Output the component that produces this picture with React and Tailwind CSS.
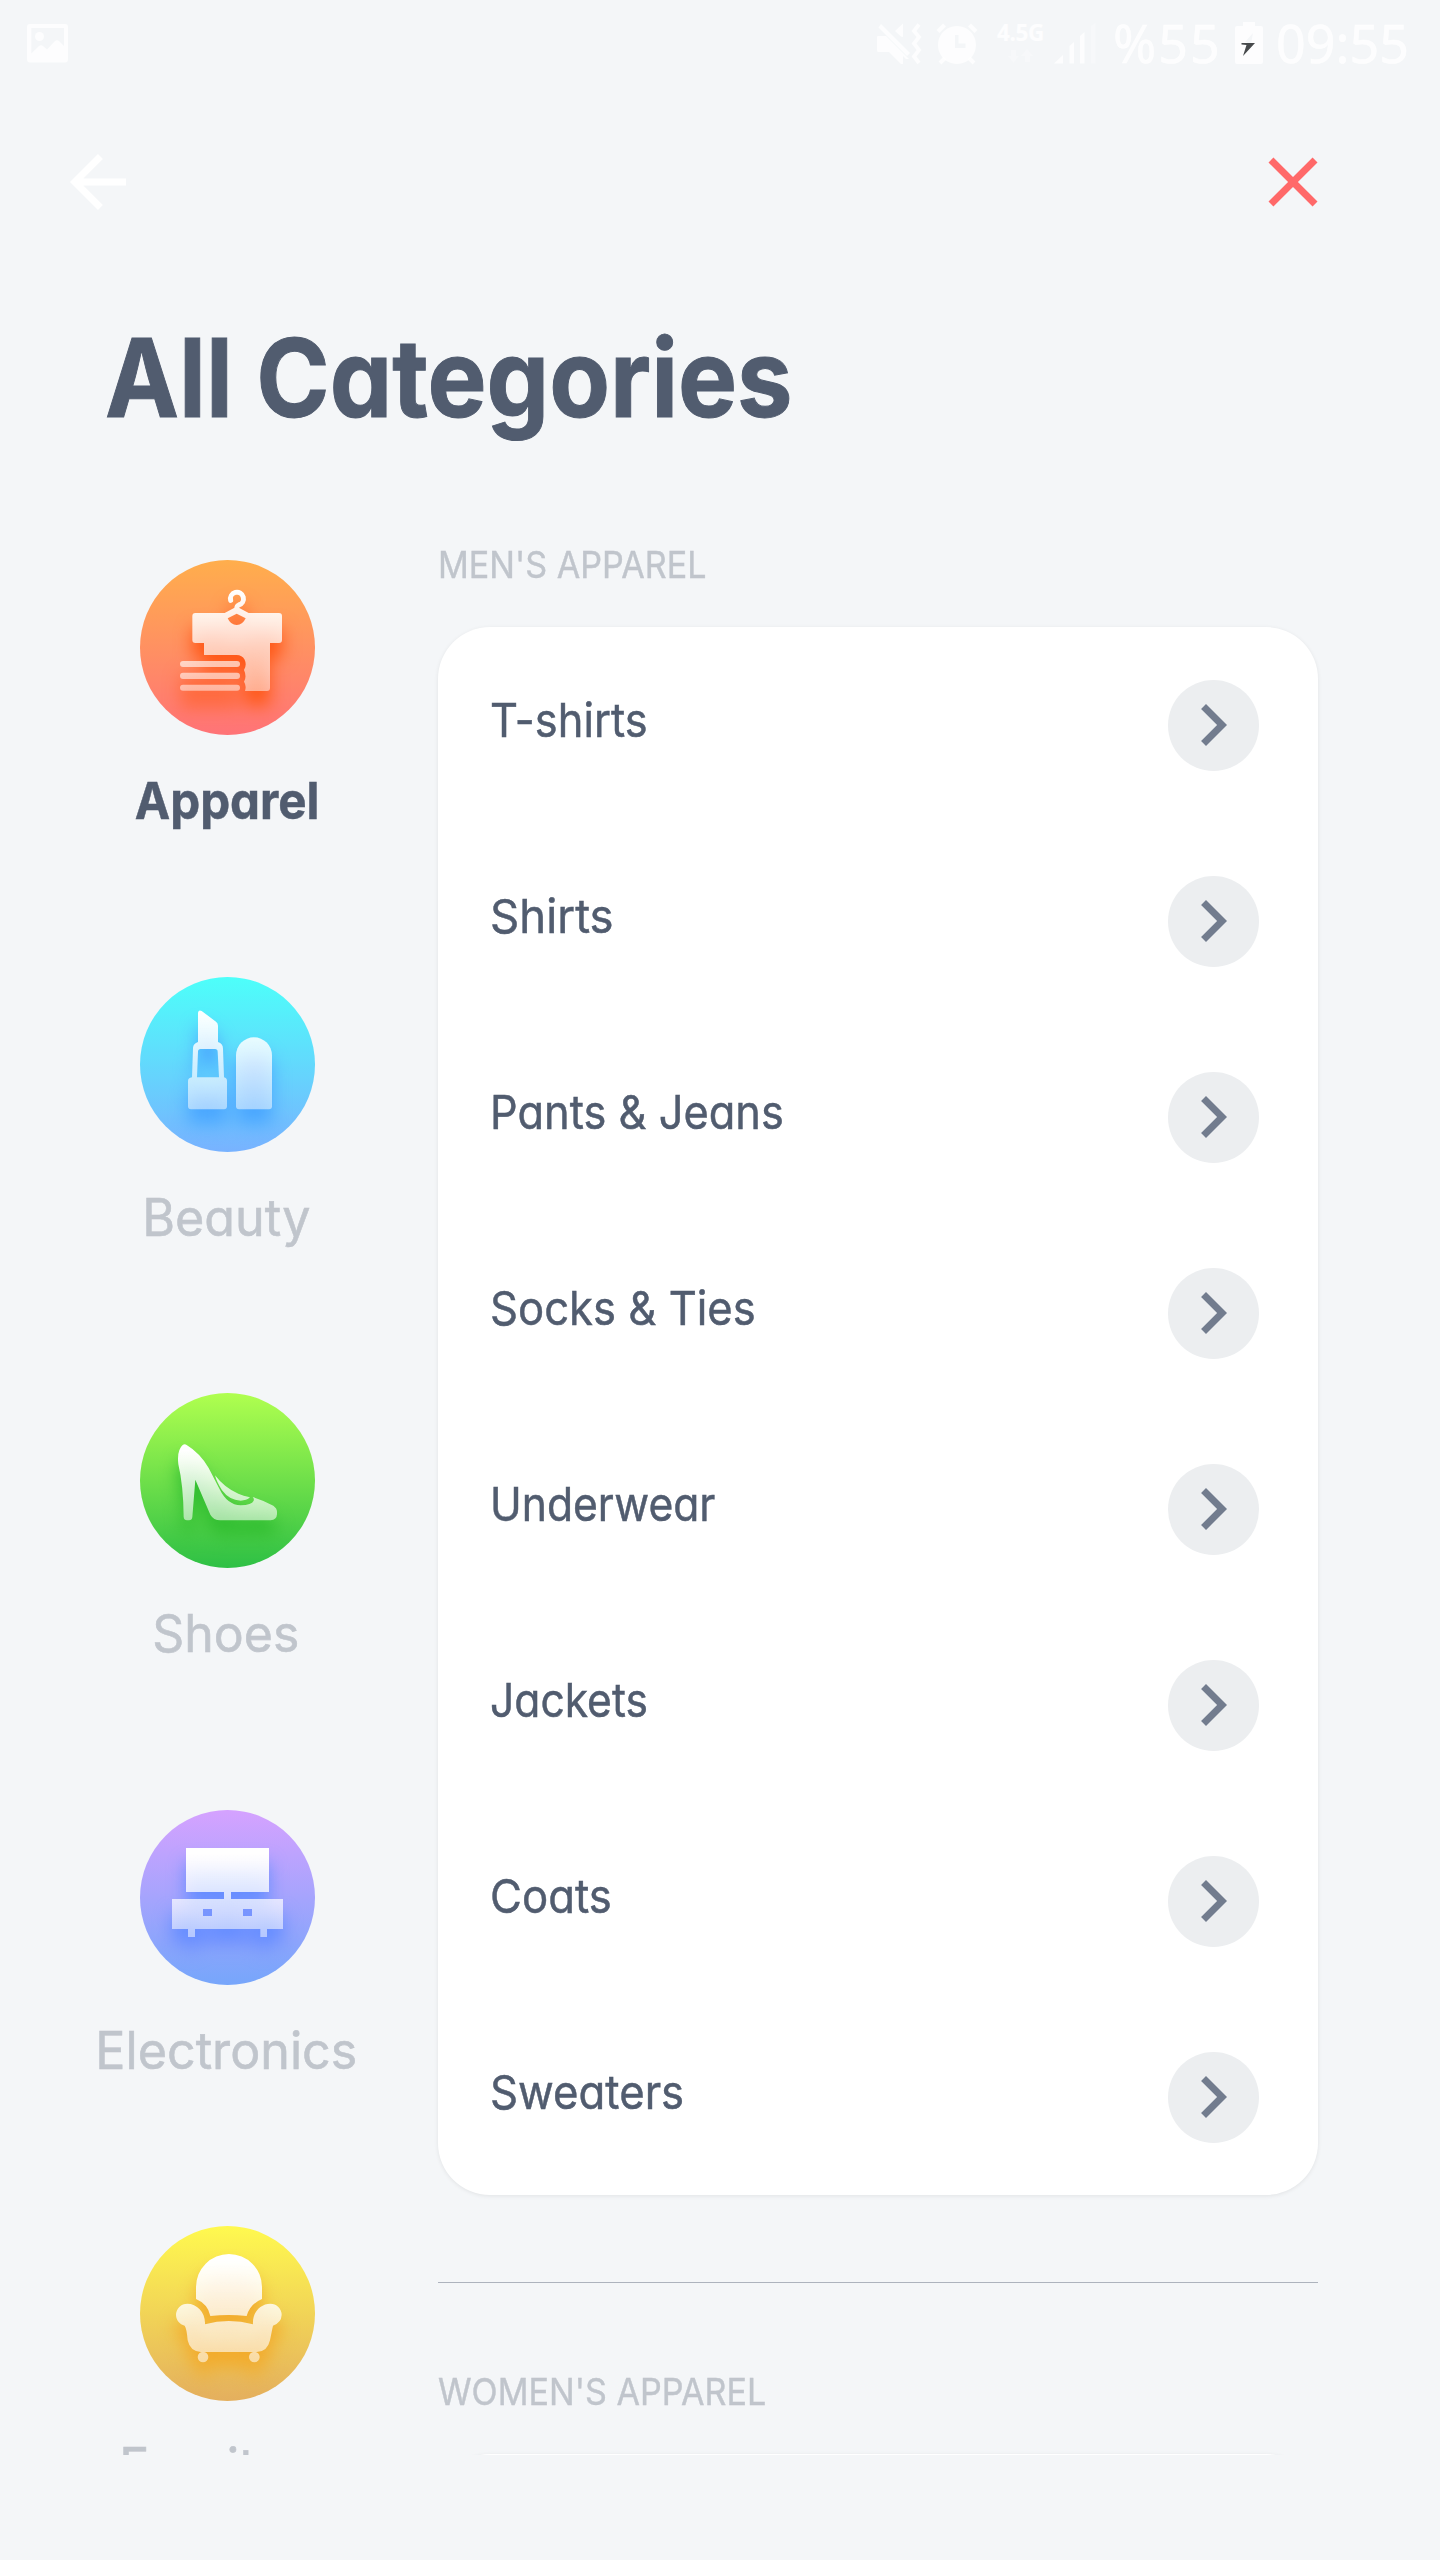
import { useId } from "react";

const categories = [
  {
    name: "Apparel",
    active: true,
    stretch: 0.923,
    viewBox: "60 60 525 525",
    box: [60, 60],
    from: "#ffae4c",
    to: "#ff7377",
    shadow: "#ff5717",
    top: 149,
    bottom: 453,
    fade: 0.5,
    shape: (
      <>
        <path d="M332 181A19.500 19.500 0 1 1 356 195Q350 197 350 208" fill="none" stroke="white" strokeWidth="15" strokeLinecap="round" />
        <path d="M226 219H314L342 204H358L386 219H477Q486 219 486 228V300Q486 309 477 309H450V444Q450 453 441 453H375Q380 437 372 425Q381 410 372 390Q381 375 374 359Q366 345 350 345H252V309H226Q217 309 217 300V228Q217 219 226 219Z" />
        <rect x="180" y="363" width="180" height="18" rx="9" />
        <rect x="180" y="398" width="180" height="19" rx="9" />
        <rect x="180" y="434" width="180" height="18" rx="9" />
        <path d="M323 235L350 221L377 235Q368 255 350 255Q332 255 323 235Z" fill="black" />
      </>
    ),
  },
  {
    name: "Beauty",
    stretch: 0.975,
    viewBox: "60 50 525 525",
    box: [60, 50],
    from: "#4dfffa",
    to: "#78b2ff",
    shadow: "#4aa6ff",
    top: 150,
    bottom: 447,
    fade: 0.5,
    shape: (
      <>
        <path d="M234 157Q236 147 245 152L288 184Q294 189 294 196V245Q309 250 309 265L312 351Q321 353 321 362V438Q321 447 312 447H213Q204 447 204 438V362Q204 353 216 351L219 262Q220 250 234 245Z" />
        <path d="M234 274Q234 266 242 266H285Q293 266 293 274L297 351H231Z" fill="black" />
        <path d="M348 285A54 54 0 0 1 456 285V438Q456 447 447 447H357Q348 447 348 438Z" />
      </>
    ),
  },
  {
    name: "Shoes",
    stretch: 0.97,
    viewBox: "60 68 525 525",
    box: [60, 68],
    from: "#b0ff4f",
    to: "#2ec045",
    shadow: "#30bd30",
    top: 240,
    bottom: 455,
    fade: 0.55,
    shape: (
      <>
        <path d="M188 224Q194 219 200 224Q240 248 266 293L299 357Q322 404 362 405Q395 404 401 391Q403 385 398 380Q433 391 460 406Q471 414 471 424V432Q470 449 452 450H300Q281 450 271 433L226 328L217 440Q216 450 207 450H201Q192 450 191 440Q190 345 175 282Q170 240 188 224Z" />
        <path d="M285 315Q315 354 355 370Q370 376 390 381Q380 391 362 391Q328 390 306 360Q290 335 285 315Z" />
      </>
    ),
  },
  {
    name: "Electronics",
    stretch: 0.975,
    viewBox: "180 60 525 525",
    box: [180, 60],
    from: "#d5a2ff",
    to: "#76a6fb",
    shadow: "#668dff",
    top: 190,
    bottom: 441,
    fade: 0.5,
    shape: (
      <>
        <rect x="318" y="174" width="249" height="132" />
        <rect x="432" y="300" width="21" height="30" />
        <rect x="276" y="327" width="333" height="90" />
        <rect x="324" y="415" width="21" height="26" />
        <rect x="541" y="415" width="20" height="26" />
        <rect x="369" y="357" width="27" height="21" fill="black" />
        <rect x="489" y="357" width="27" height="21" fill="black" />
      </>
    ),
  },
  {
    name: "Furniture",
    stretch: 0.98,
    viewBox: "180 78 525 525",
    box: [180, 78],
    from: "#fff94f",
    to: "#e4af5e",
    shadow: "#f2ab2c",
    top: 180,
    bottom: 487,
    fade: 0.55,
    shape: (
      <>
        <path d="M348 297V261A99 99 0 0 1 546 261V297Q510 312 500 348Q446 342 391 348Q384 312 348 297Z" />
        <path d="M314 377C299 373 288 360 288 345A34 34 0 0 1 322 311C351 311 377 337 375 373Q446 353 519 373C516 337 542 311 571 311A34 34 0 0 1 605 345Q604 368 579 377Q577 385 570 421Q562 456 530 456H362Q330 454 323 421Q320 385 314 377Z" />
        <circle cx="369" cy="471" r="16" />
        <circle cx="523" cy="471" r="16" />
      </>
    ),
  },
];

const items = [
  ["T-shirts", 0.924],
  ["Shirts", 0.97],
  ["Pants & Jeans", 0.923],
  ["Socks & Ties", 0.928],
  ["Underwear", 0.907],
  ["Jackets", 0.906],
  ["Coats", 0.93],
  ["Sweaters", 0.93],
];

function CategoryIcon({ category }) {
  const id = useId().replace(/[^a-zA-Z0-9]/g, "");
  const [x, y] = category.box;
  return (
    <svg viewBox={category.viewBox} className="size-[175px] shrink-0">
      <defs>
        <linearGradient id={`bg${id}`} x1="0" y1="0" x2="0" y2="1">
          <stop offset="0" stopColor={category.from} />
          <stop offset="1" stopColor={category.to} />
        </linearGradient>
        <linearGradient id={`fg${id}`} gradientUnits="userSpaceOnUse" x1="0" y1={category.top} x2="0" y2={category.bottom}>
          <stop offset="0" stopColor="white" />
          <stop offset="1" stopColor="white" stopOpacity={category.fade} />
        </linearGradient>
        <filter id={`blur${id}`} x="-20%" y="-20%" width="140%" height="140%" colorInterpolationFilters="sRGB">
          <feGaussianBlur stdDeviation="25" />
        </filter>
        <clipPath id={`clip${id}`}>
          <circle cx={x + 262.5} cy={y + 262.5} r="262.5" />
        </clipPath>
        <mask id={`mask${id}`} maskUnits="userSpaceOnUse" x={x} y={y} width="525" height="525">
          <g fill="white">{category.shape}</g>
        </mask>
      </defs>
      <circle cx={x + 262.5} cy={y + 262.5} r="262.5" fill={`url(#bg${id})`} />
      <g clipPath={`url(#clip${id})`}>
        <g transform="translate(0 45)" filter={`url(#blur${id})`}>
          <rect x={x} y={y} width="525" height="525" fill={category.shadow} mask={`url(#mask${id})`} />
        </g>
      </g>
      <rect x={x} y={y} width="525" height="525" fill={`url(#fg${id})`} mask={`url(#mask${id})`} />
    </svg>
  );
}

function StatusBar() {
  return (
    <div className="flex h-[87px] items-start text-white/80">
      <svg viewBox="0 0 41 39" className="ml-[27px] mt-[24px] h-[39px] w-[41px]" fill="currentColor">
        <path fillRule="evenodd" d="M3 0H38Q41 0 41 3V35Q41 38.500 38 38.500H3Q0 38.500 0 35V3Q0 0 3 0ZM4.300 4V29.500L12 22Q14 20.500 16 22L20 25.500L28 17Q30 15.500 32 17L37 22V4Z" />
        <circle cx="12.500" cy="12.500" r="4.500" />
      </svg>
      <div className="ml-auto flex w-[563px] items-start">
        <svg viewBox="0 0 45 42" className="mt-[23px] h-[42px] w-[45px] shrink-0" fill="currentColor">
          <path d="M1 13H9L13 17L32 36L29 36L26 33V41H24L12 29H1Q0 29 0 27V14Q0 13 1 13ZM18 8L26 .500V14L24 13.500ZM4 1L33 30L30 33L1.500 4.500Z" />
          <path d="M42 1.500L37 8L42 14L37 20.500L42 27L37 33.500L42 40" fill="none" stroke="currentColor" strokeWidth="3.800" />
        </svg>
        <svg viewBox="0 0 42 42" className="ml-[14px] mt-[23px] size-[42px] shrink-0" fill="currentColor">
          <path fillRule="evenodd" d="M21 3A19 19 0 1 1 20.900 3ZM19 12V25H29.500V20.500H22.500V12Z" />
          <path d="M2 8.500L8.500 2M33.500 2L40 8.500M4 40L9 35M33 35L38 40" stroke="currentColor" strokeWidth="4" />
        </svg>
        <div className="ml-[19px] mt-[22.500px] flex w-[47px] shrink-0 flex-col items-center">
          <span className="font-['Noto_Sans',sans-serif] text-[22.500px] font-bold leading-[20px] tracking-[-0.300px]">4.5G</span>
          <svg viewBox="0 0 25 14" className="mt-[6px] h-[14px] w-[25px] opacity-30" fill="currentColor">
            <path d="M3 1H8V7H11L5.500 14L0 7H3ZM17 13V7H13L19 0L25 7H22V13Z" />
          </svg>
        </div>
        <svg viewBox="0 0 42 41" className="ml-[10px] mt-[23px] h-[41px] w-[42px] shrink-0" fill="currentColor">
          <path d="M0 40.500L9 32V40.500ZM15.500 40.500V23L20 19V40.500ZM26 40.500V13L30.500 9V40.500Z" />
          <path d="M37 40.500V3L41.500 0V40.500Z" opacity=".3" />
        </svg>
        <span className="ml-[17px] mt-[8px] w-[122px] shrink-0 font-['Noto_Sans',sans-serif] text-[52px] leading-[70px] tracking-[2px] [-webkit-text-stroke:0.500px]">%55</span>
        <svg viewBox="0 0 28 42" className="mt-[22px] h-[42px] w-[28px] shrink-0">
          <path d="M8 0H20V4H26Q28 4 28 6V40Q28 42 26 42H2Q0 42 0 40V6Q0 4 2 4H8Z" fill="currentColor" />
          <path d="M18 11L10 20H12V22H16Z" fill="#f4f6f8" />
          <path d="M6.500 21H20L8 34L11.500 23L6.500 22.500Z" fill="#474a4c" />
        </svg>
        <span className="ml-[13px] mt-[8px] font-['Noto_Sans',sans-serif] text-[52px] leading-[70px] [-webkit-text-stroke:0.500px]">09:55</span>
      </div>
    </div>
  );
}

function SectionTitle({ children, className }) {
  return (
    <h2 className={`${className} origin-left scale-x-[0.922] whitespace-nowrap text-[37px] leading-[40px] text-[#c0c5cc] [-webkit-text-stroke:0.400px]`}>
      {children}
    </h2>
  );
}

export default function App() {
  return (
    <div className="h-[2560px] w-[1440px] overflow-hidden bg-[#f4f6f8] font-[Inter,sans-serif] font-normal [font-feature-settings:'cv11']">
      <StatusBar />
      <header className="mt-[53px] flex justify-between pl-[56px] pr-[105px]">
        <svg viewBox="0 0 24 24" className="size-[84px]" fill="white">
          <path d="M20 11H7.830l5.590-5.590L12 4l-8 8 8 8 1.410-1.410L7.830 13H20v-2z" />
        </svg>
        <svg viewBox="0 0 24 24" className="size-[84px]" fill="#ff6969">
          <path d="M19 6.410L17.590 5 12 10.590 6.410 5 5 6.410 10.590 12 5 17.590 6.410 19 12 13.410 17.590 19 19 17.590 13.410 12z" />
        </svg>
      </header>
      <h1 className="ml-[105px] mt-[93.500px] origin-left scale-x-[0.914] whitespace-nowrap text-[108.500px] font-bold leading-[120px] text-[#515c6f] [-webkit-text-stroke:1px]">
        All Categories
      </h1>
      <div className="flex h-[2017.500px] overflow-hidden">
        <nav className="ml-[19px] w-[417px] shrink-0 pt-[122.500px]">
          {categories.map((category) => (
            <div key={category.name} className="flex h-[416.600px] flex-col items-center">
              <CategoryIcon category={category} />
              <span
                style={{ scale: `${category.stretch} 1` }}
                className={
                  category.active
                    ? "mt-[34.500px] text-[51.500px] font-bold leading-[60px] text-[#515c6f] [-webkit-text-stroke:0.500px]"
                    : "mr-[3px] mt-[35px] text-[51.500px] leading-[60px] text-[#c0c5cc] [-webkit-text-stroke:0.600px]"
                }
              >
                {category.name}
              </span>
            </div>
          ))}
        </nav>
        <main className="ml-[2px] w-[880px] shrink-0">
          <SectionTitle className="mt-[107px]">MEN'S APPAREL</SectionTitle>
          <ul className="mt-[42.500px] rounded-[52px] bg-white shadow-[0_1px_4px_rgba(0,0,0,0.080)]">
            {items.map(([name, stretch]) => (
              <li key={name} className="flex h-[196px] items-center justify-between pl-[51.500px] pr-[59.500px]">
                <span
                  style={{ scale: `${stretch} 1` }}
                  className="origin-left pb-[10px] text-[47px] leading-[60px] text-[#515c6f] [-webkit-text-stroke:0.500px]"
                >
                  {name}
                </span>
                <span className="flex size-[91px] items-center justify-center rounded-full bg-[#eceef0]">
                  <svg viewBox="0 0 24 24" className="size-[84px] shrink-0" fill="#727c8e">
                    <path d="M10 6L8.590 7.410 13.170 12l-4.580 4.590L10 18l6-6z" />
                  </svg>
                </span>
              </li>
            ))}
          </ul>
          <div className="mt-[87px] h-px bg-[#adb3bd]" />
          <SectionTitle className="mt-[88.500px]">WOMEN'S APPAREL</SectionTitle>
          <div className="mt-[42.500px] h-[400px] rounded-[52px] bg-white shadow-[0_1px_4px_rgba(0,0,0,0.080)]" />
        </main>
      </div>
    </div>
  );
}
